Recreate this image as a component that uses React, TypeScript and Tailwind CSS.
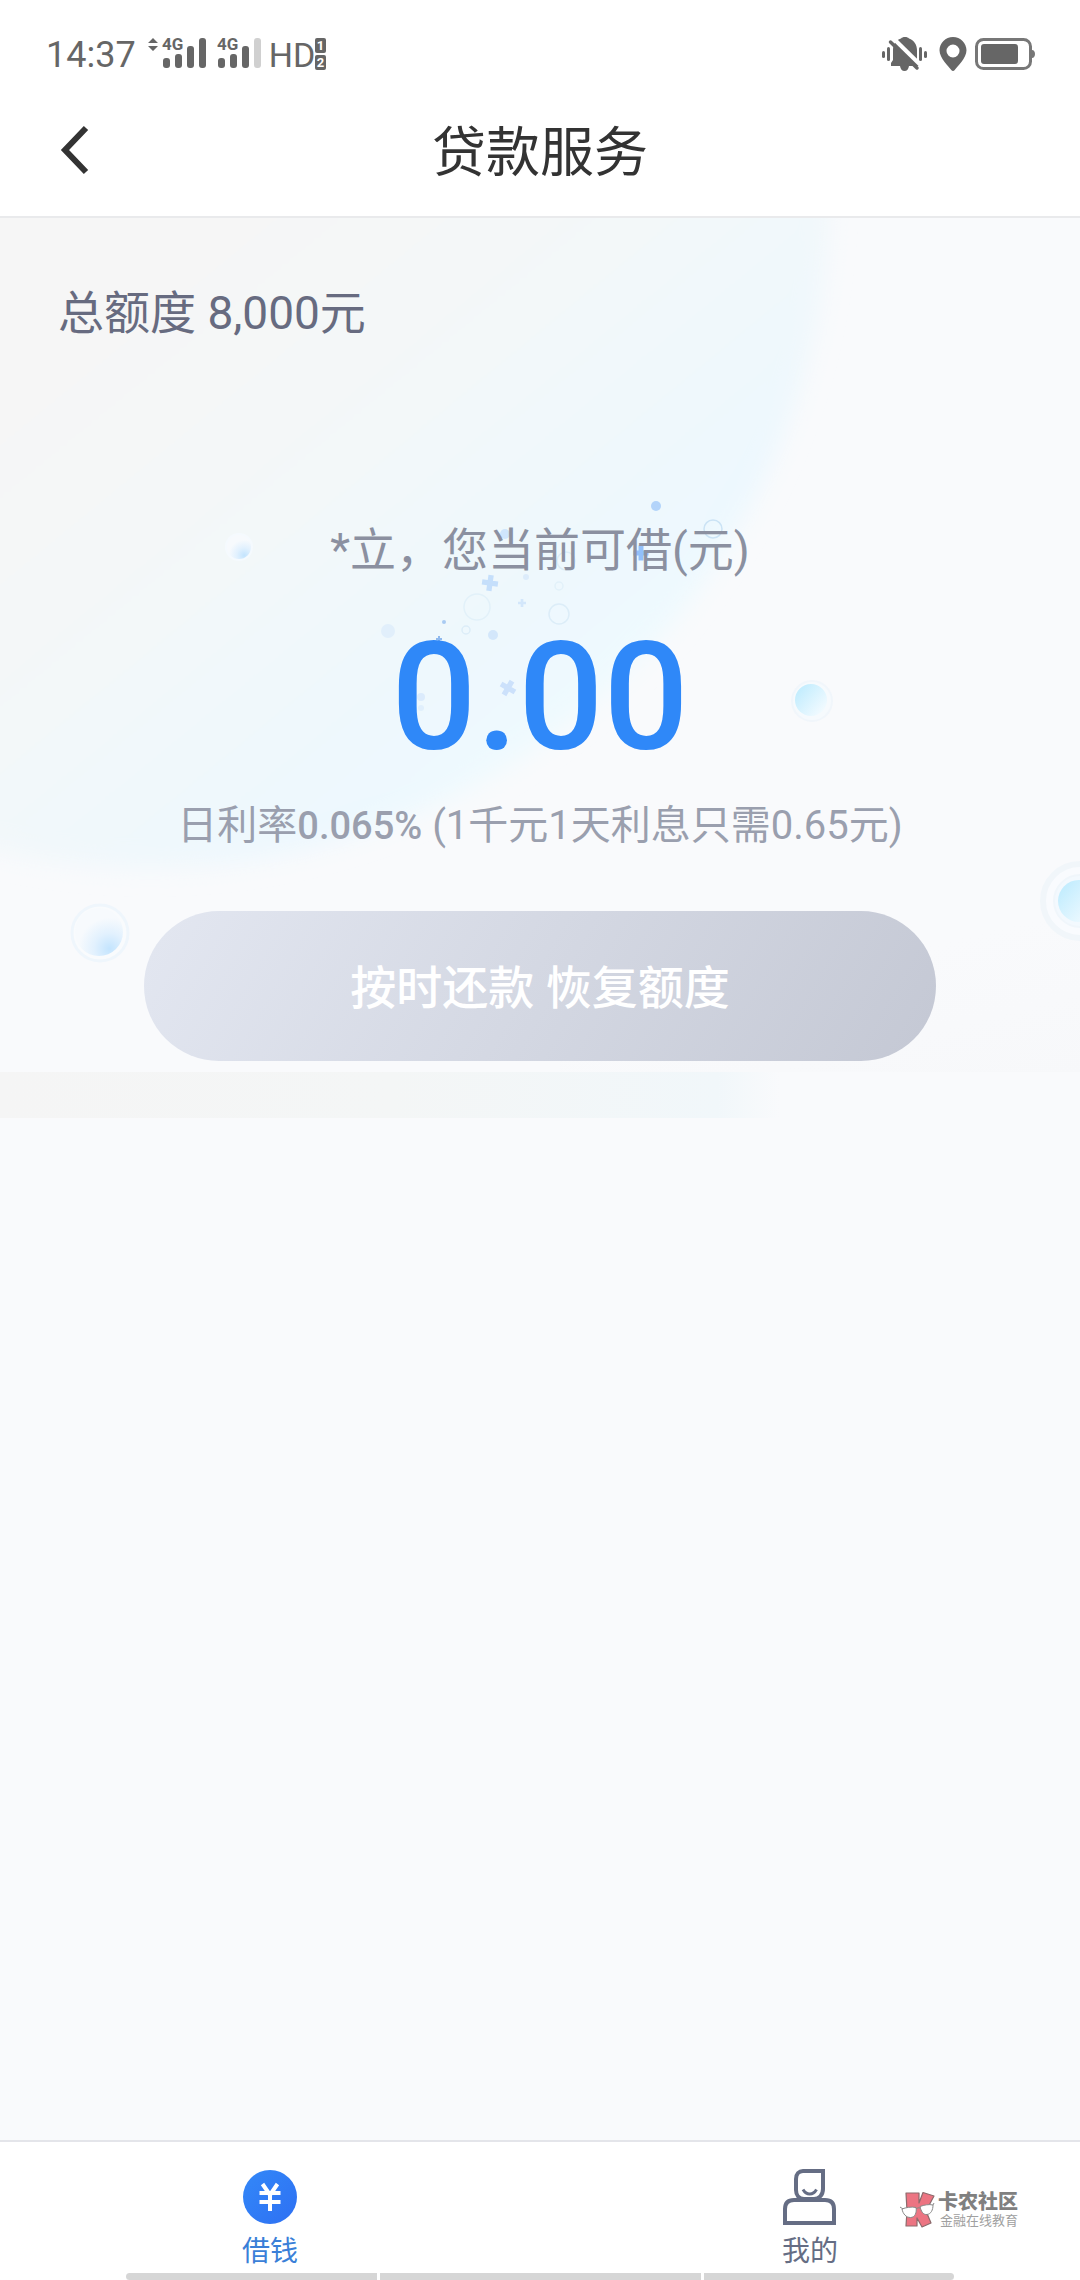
import type { ReactNode } from "react";

const FONT = "font-[Roboto,'Noto_Sans_CJK_SC',sans-serif]";

function Signal({ weak = false }: { weak?: boolean }) {
  return (
    <svg className="mb-2.5" width="48" height="44" viewBox="-1 -10 48 44" fill="#666" aria-hidden="true">
      <text x="-1" y="13" fontSize="17" fontWeight="700" fontFamily="Roboto, sans-serif">
        4G
      </text>
      <rect x="0" y="21" width="7" height="10" rx="3" />
      <rect x="12" y="17" width="7" height="14" rx="3" />
      <rect x="24" y="9" width="7" height="22" rx="3" />
      <rect x="36" y="1" width="7" height="30" rx="3" fill={weak ? "#d0d0d0" : "#666"} />
    </svg>
  );
}

function StatusBar() {
  return (
    <div className="flex h-[108px] items-center justify-between pr-11 pl-[46px] text-[#666]">
      <div className="flex items-center">
        <span className="pt-0.5 text-[36px] leading-[40px]">14:37</span>
        <svg className="mr-1 mb-5 ml-3" width="10" height="13" viewBox="0 0 10 13" fill="#666" aria-hidden="true">
          <path d="M5 0 10 5H0ZM5 13 0 8h10Z" />
        </svg>
        <Signal />
        <div className="ml-[7px]">
          <Signal weak />
        </div>
        <span className="ml-1 pt-0.5 text-[34px] leading-[40px]">HD</span>
        <svg width="12" height="34" viewBox="0 0 12 34" aria-hidden="true">
          <rect x="0" y="1" width="11" height="15" rx="2" fill="#666" />
          <rect x="0" y="18" width="11" height="15" rx="2" fill="#666" />
          <g fill="#fff" fontSize="13" fontWeight="700" fontFamily="Roboto, sans-serif" textAnchor="middle">
            <text x="5.5" y="13">1</text>
            <text x="5.5" y="30">2</text>
          </g>
        </svg>
      </div>
      <div className="flex items-center">
        <svg width="48" height="36" viewBox="0 0 48 36" fill="#666" aria-label="静音">
          <rect x="1" y="15" width="3" height="7" rx="1.5" />
          <rect x="6" y="11" width="3" height="14" rx="1.5" />
          <rect x="38" y="11" width="3" height="14" rx="1.5" />
          <rect x="43" y="15" width="3" height="7" rx="1.5" />
          <path d="M24 1c-2 0-3 .5-4 1.500C14.500 4 12 9 12 14v10l-2 3v3h9c.5 3 2 5 4.500 5s4-2 4.500-5h10v-3l-2-3V14c0-5-3-10-8-11.500C27 1.500 26 1 24 1Z" />
          <path d="M12 2 40 29.500" stroke="#fff" strokeWidth="4" />
          <path d="M9.500 6 36 32" stroke="#666" strokeWidth="3.500" strokeLinecap="round" />
        </svg>
        <svg className="ml-2.5" width="28" height="36" viewBox="0 0 28 36" fill="#666" aria-hidden="true">
          <path
            fillRule="evenodd"
            d="M14 1C6.500 1 .5 7 .5 14.300.5 22.500 10 31 12.500 34.200c.8 1 2.200 1 3 0C18 31 27.500 22.500 27.500 14.300 27.500 7 21.500 1 14 1Zm0 7.500a6.500 6.500 0 1 1 0 13 6.500 6.500 0 0 1 0-13Z"
          />
        </svg>
        <svg className="ml-2" width="61" height="34" viewBox="0 0 61 34" aria-hidden="true">
          <rect x="1.500" y="2.500" width="54" height="29" rx="7" fill="none" stroke="#777" strokeWidth="3" />
          <rect x="6" y="7" width="37" height="20" rx="3" fill="#666" />
          <path d="M57 13c2 0 3 2 3 4s-1 4-3 4Z" fill="#777" />
        </svg>
      </div>
    </div>
  );
}

function TopBar() {
  return (
    <header className="relative flex h-[110px] items-center justify-center border-b-2 border-[#e9eaec] pb-4">
      <button type="button" aria-label="返回" className="absolute top-2 left-[52px] p-2">
        <svg width="32" height="52" viewBox="0 0 32 52" fill="none" stroke="#333" strokeWidth="6">
          <path d="M26 4 5 26l21 22" />
        </svg>
      </button>
      <h1 className="text-[54px] leading-[72px] text-[#333]">贷款服务</h1>
    </header>
  );
}

function Plus({ x, y, s, r = 0, color }: { x: number; y: number; s: number; r?: number; color: string }) {
  const h = s / 2;
  return (
    <path
      d={`M${-h} 0H${h}M0 ${-h}V${h}`}
      transform={`translate(${x} ${y}) rotate(${r})`}
      stroke={color}
      strokeWidth={s / 3}
    />
  );
}

function Backdrop() {
  return (
    <svg
      className="absolute inset-0 h-full w-full"
      viewBox="0 0 1080 900"
      preserveAspectRatio="xMidYMin slice"
      fill="none"
      aria-hidden="true"
    >
      <defs>
        <linearGradient id="blob" gradientUnits="userSpaceOnUse" x1="150" y1="0" x2="560" y2="500">
          <stop offset="0" stopColor="#f6f6f6" />
          <stop offset="0.5" stopColor="#f3f8f9" />
          <stop offset="0.9" stopColor="#edf8fe" />
          <stop offset="1" stopColor="#effafe" />
        </linearGradient>
        <linearGradient id="strip" x1="0" x2="1" y1="0" y2="0">
          <stop offset="0" stopColor="#f5f5f5" />
          <stop offset="0.5" stopColor="#f4f6f6" />
          <stop offset="0.92" stopColor="#f1f7fa" />
          <stop offset="1" stopColor="#f9fafc" />
        </linearGradient>
        <linearGradient id="corner" gradientUnits="userSpaceOnUse" x1="960" y1="720" x2="1000" y2="880">
          <stop offset="0" stopColor="#f7f8fa" stopOpacity="0" />
          <stop offset="1" stopColor="#f7f8fa" />
        </linearGradient>
        <radialGradient id="glow" cx="0.72" cy="0.85" r="0.65">
          <stop offset="0" stopColor="#c3e4fe" />
          <stop offset="0.5" stopColor="#e2f1fe" />
          <stop offset="1" stopColor="#f7fafd" />
        </radialGradient>
        <linearGradient id="cyan" x1="0.1" y1="0.2" x2="0.9" y2="0.9">
          <stop offset="0" stopColor="#c3edfe" />
          <stop offset="1" stopColor="#f4fbff" />
        </linearGradient>
        <filter id="soft" x="-10%" y="-10%" width="120%" height="120%">
          <feGaussianBlur stdDeviation="12" />
        </filter>
      </defs>

      <ellipse cx="150" cy="-30" rx="680" ry="680" fill="url(#blob)" filter="url(#soft)" />
      <rect x="560" y="700" width="520" height="154" fill="url(#corner)" />
      <rect x="0" y="854" width="780" height="46" fill="url(#strip)" />

      <circle cx="239" cy="329" r="14" fill="#f5fafe" />
      <circle cx="239" cy="329" r="12" fill="url(#glow)" />
      <circle cx="812" cy="483" r="20" fill="#f6fafd" stroke="#f1f6fb" strokeWidth="2" />
      <circle cx="811" cy="482" r="16" fill="url(#cyan)" />
      <circle cx="100" cy="715" r="28" fill="#f9fbfd" stroke="#eff6fc" strokeWidth="3" />
      <circle cx="99" cy="714" r="24" fill="url(#glow)" />
      <circle cx="1080" cy="683" r="37" fill="#f9fbfe" stroke="#f1f6fa" strokeWidth="6" />
      <circle cx="1080" cy="683" r="26" fill="#f3f9fe" stroke="#f0f6fb" strokeWidth="2" />
      <circle cx="1079" cy="683" r="21" fill="url(#cyan)" />

      <circle cx="656" cy="288" r="5" fill="#b3d4fa" />
      <circle cx="505" cy="316" r="5" fill="#cfe5fc" />
      <circle cx="526" cy="359" r="3" fill="#dcecfb" />
      <circle cx="444" cy="404" r="2" fill="#a9cbf2" />
      <circle cx="493" cy="417" r="5" fill="#d3e7fb" />
      <circle cx="388" cy="413" r="7" fill="#e1effb" />
      <circle cx="421" cy="479" r="4" fill="#dbebfc" />
      <circle cx="421" cy="490" r="3" fill="#e0effc" />
      <g stroke="#dcedf8" strokeWidth="1.500">
        <circle cx="713" cy="311" r="9" stroke="#cbe3f5" />
        <circle cx="566" cy="343" r="9" />
        <circle cx="559" cy="368" r="4" stroke="#e2f1f9" />
        <circle cx="477" cy="389" r="13" stroke="#e2f1f9" />
        <circle cx="559" cy="396" r="10" />
        <circle cx="466" cy="412" r="4" />
      </g>
      <Plus x={641} y={335} s={15} color="#92c0fa" />
      <Plus x={490} y={365} s={16} r={8} color="#c5dffb" />
      <Plus x={522} y={385} s={8} color="#d3e7fb" />
      <Plus x={439} y={421} s={6} color="#8fb9ee" />
      <Plus x={508} y={470} s={16} r={30} color="#cce1fb" />
    </svg>
  );
}

function LoanPanel() {
  return (
    <section className="relative pb-[57px]">
      <Backdrop />
      <div className="relative flex flex-col items-center">
        <p className="mt-[61px] self-start pl-[58px] text-[46px] leading-[68px] text-[#676b80]">总额度 8,000元</p>
        <p className="mt-[169px] text-[46px] leading-[68px] text-[#8b90a0]">*立，您当前可借(元)</p>
        <p className="mt-[25px] text-[150px] leading-[178px] font-medium text-[#2f88f8]">0.00</p>
        <p className="mt-[9px] text-[40px] leading-[60px] text-[#9a9fae]">
          日利率<b className="text-[38px] font-medium">0.065%</b> (1千元1天利息只需0.65元)
        </p>
        <button
          type="button"
          className="mt-[55px] h-[150px] w-11/15 rounded-full bg-linear-[120deg,#e3e7f1,#c4c8d4] pt-1 text-[46px] leading-[68px] font-medium text-white"
        >
          按时还款 恢复额度
        </button>
      </div>
    </section>
  );
}

function Tab({ label, active = false, children }: { label: string; active?: boolean; children: ReactNode }) {
  return (
    <a href="#" aria-current={active ? "page" : undefined} className="flex flex-1 flex-col items-center pt-[26px]">
      {children}
      <span className={active ? "mt-1.5 text-[28px] leading-[40px] text-[#3a7fd8]" : "mt-1.5 text-[28px] leading-[40px] text-[#656d84]"}>
        {label}
      </span>
    </a>
  );
}

function Watermark() {
  return (
    <div className="absolute top-[49px] right-[62px] flex items-center">
      <svg width="36" height="38" viewBox="0 0 36 38" aria-hidden="true">
        <path
          d="M6 2h13v10L23 1.500 34 5l-8 15 5 12-9 4-5-9v8H6l1-15Z"
          fill="#ec7482"
          stroke="#8d6a6c"
          strokeWidth="1.200"
          strokeLinejoin="round"
        />
        <path
          d="M2 18c4-1.500 9-2.500 14-1.500 1 5-1 10-5.500 10S3 23 2 18ZM20 15.500c4-1.500 9-2.500 13-1.500 0 5-2 9-6 9.500S21 20 20 15.500Z"
          fill="#fff"
          stroke="#888"
          strokeWidth="1"
        />
        <path d="M16 18q2-2 4-1M0 16l3 2M33 14l1-2" stroke="#888" strokeWidth="1" fill="none" />
      </svg>
      <div className="ml-0.5 flex flex-col">
        <span className="text-[20px] leading-[22px] font-black text-[#808080]">卡农社区</span>
        <span className="pl-0.5 text-[13px] leading-[16px] text-[#a0a0a0]">金融在线教育</span>
      </div>
    </div>
  );
}

function TabBar() {
  return (
    <footer className="relative border-t-2 border-[#e4e5ea] bg-white">
      <nav className="flex h-[131px]">
        <Tab label="借钱" active>
          <svg width="56" height="58" viewBox="0 0 56 58" fill="none" aria-hidden="true">
            <defs>
              <linearGradient id="coin" x1="0" y1="0" x2="1" y2="1">
                <stop offset="0" stopColor="#3388f8" />
                <stop offset="1" stopColor="#2e70f3" />
              </linearGradient>
            </defs>
            <circle cx="28" cy="29" r="27" fill="url(#coin)" />
            <path d="m20.500 16 7.500 11L35.500 16M17.500 25h21M17.500 34h21M28 25v18" stroke="#fff" strokeWidth="4" />
          </svg>
        </Tab>
        <Tab label="我的">
          <svg width="56" height="58" viewBox="0 0 56 58" fill="none" stroke="#656d84" aria-hidden="true">
            <path d="M21 3h20v18c0 6-4 10-9 10H22c-5 0-8-4-8-9V11c0-5 3-8 7-8Z" strokeWidth="4" />
            <path d="M21 21.500c3.500 6 10 6 13.500 0" strokeWidth="3" />
            <path d="M12 32h31c6 0 9 3 9 9v14H3V41c0-6 3-9 9-9Z" strokeWidth="4" fill="#fff" />
          </svg>
        </Tab>
      </nav>
      <Watermark />
      <div className="mx-[126px] flex h-[7px] gap-[3px] overflow-hidden rounded-full">
        <div className="flex-[251] bg-[#d6d6d6]" />
        <div className="flex-[321] bg-[#d6d6d6]" />
        <div className="flex-[250] bg-[#d6d6d6]" />
      </div>
    </footer>
  );
}

export default function App() {
  return (
    <div className={`flex min-h-screen flex-col bg-[#f9fafc] ${FONT}`}>
      <div className="bg-white">
        <StatusBar />
        <TopBar />
      </div>
      <main className="flex-1">
        <LoanPanel />
      </main>
      <TabBar />
    </div>
  );
}
